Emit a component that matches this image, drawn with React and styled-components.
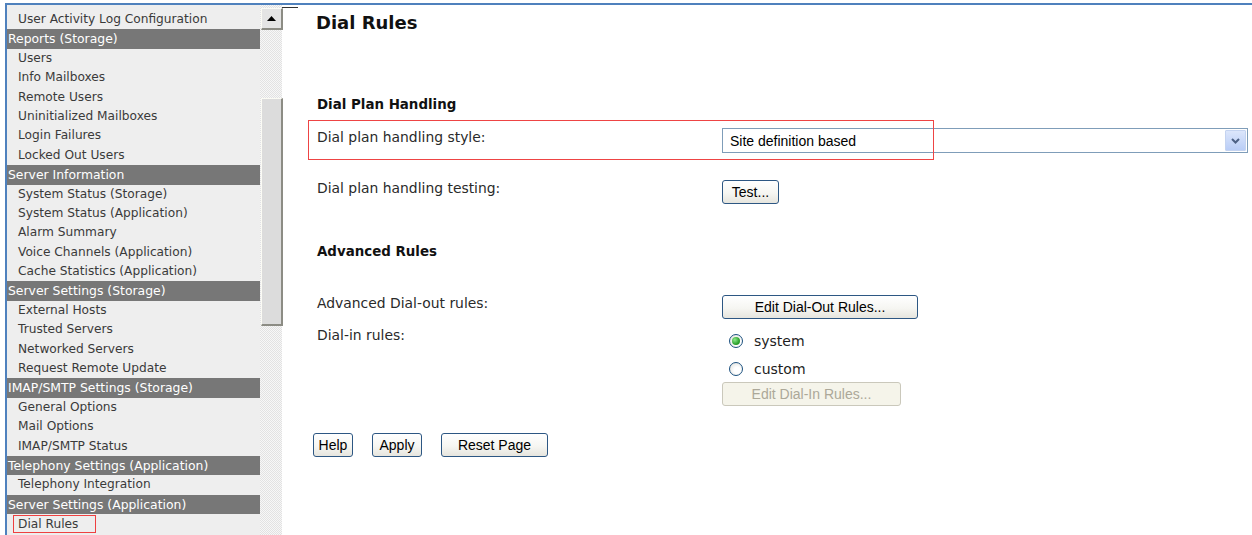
import styled, { createGlobalStyle } from 'styled-components';

const GlobalStyle = createGlobalStyle`
  html, body {
    margin: 0;
    padding: 0;
    background: #ffffff;
    overflow: hidden;
  }
`;

const Frame = styled.div`
  margin: 3px 0 0 5px;
  height: 532px;
  border-top: 2px solid #4f81bd;
  border-left: 2px solid #4f81bd;
  display: flex;
  overflow: hidden;
`;

const Sidebar = styled.nav`
  width: 253px;
  flex: none;
  background: #eeeeee;
  padding-top: 5px;
  font-family: "DejaVu Sans", Verdana, sans-serif;
`;

const NavItem = styled.div`
  height: 19.4px;
  line-height: 19.4px;
  white-space: nowrap;
  color: ${(p) => (p.$header ? '#ffffff' : '#3a3a3a')};
  background: ${(p) => (p.$header ? '#777777' : 'transparent')};
  padding-left: ${(p) => (p.$header ? '1px' : '11px')};
  font-size: ${(p) => (p.$header ? '12.4px' : '12.2px')};
`;

const Marked = styled.span`
  display: inline-block;
  vertical-align: top;
  margin: 1px 0 0 -5px;
  padding: 0 17px 0 4px;
  line-height: 16px;
  border: 1px solid #ee4040;
`;

const Scrollbar = styled.div`
  width: 22px;
  flex: none;
  display: flex;
  flex-direction: column;
  padding-top: 3px;
  background-color: #f4f4f4;
  background-image: repeating-conic-gradient(#e2e2e2 0 25%, #f7f7f7 0 50%);
  background-size: 2px 2px;
`;

const ScrollButton = styled.div`
  width: 19px;
  height: 19px;
  margin-left: 1px;
  background: #e4e4e4;
  border-top: 1px solid #fbfbf4;
  border-left: 1px solid #fbfbf4;
  border-right: 2px solid #8c8c84;
  border-bottom: 2px solid #8c8c84;
  display: flex;
  align-items: center;
  justify-content: center;
`;

const Thumb = styled(ScrollButton)`
  height: 225px;
  margin-top: 68px;
  background: #dcdcdc;
`;

const Content = styled.main`
  flex: 1;
  position: relative;
  padding: 0 4px 0 26px;
  font-family: "DejaVu Sans", Verdana, sans-serif;
  color: #1e1e1e;
  &::before {
    content: '';
    position: absolute;
    left: 0;
    top: 2px;
    width: 16px;
    border-top: 1px solid #333333;
  }
`;

const Title = styled.h1`
  margin: 8px 0 0 8px;
  font-size: 18px;
  line-height: 20px;
  font-weight: bold;
  color: #111111;
`;

const SectionTitle = styled.h2`
  margin: ${(p) => p.$top}px 0 0 9px;
  font-size: 13.4px;
  line-height: 18px;
  font-weight: bold;
  color: #111111;
`;

const Row = styled.div`
  position: relative;
  display: grid;
  grid-template-columns: 405px 1fr;
  padding-left: 9px;
  margin-top: ${(p) => p.$top || 0}px;
  height: ${(p) => (p.$height ? `${p.$height}px` : 'auto')};
`;

const Label = styled.div`
  font-size: 13.9px;
  line-height: 16px;
  padding-top: ${(p) => p.$pad || 0}px;
  color: #2a2a2a;
`;

const Highlight = styled.span`
  position: absolute;
  left: 0;
  top: 0;
  width: 624px;
  height: 38px;
  border: 1px solid #ee4444;
  pointer-events: none;
`;

const Select = styled.div`
  margin-top: 8px;
  height: 23px;
  display: flex;
  align-items: center;
  border: 1px solid #7f9db9;
  background: #ffffff;
  font-family: "Liberation Sans", Arial, sans-serif;
  font-size: 14px;
  color: #000000;
`;

const SelectValue = styled.span`
  flex: 1;
  padding-left: 7px;
`;

const SelectButton = styled.span`
  width: 19px;
  height: 19px;
  margin-right: 1px;
  border: 1px solid #c4d3f0;
  border-radius: 1px;
  background: linear-gradient(#dce6fb, #b9cdf7);
  display: flex;
  align-items: center;
  justify-content: center;
`;

const Button = styled.button`
  height: 24px;
  width: ${(p) => p.$width}px;
  padding: 0;
  font-family: "Liberation Sans", Arial, sans-serif;
  font-size: 14px;
  color: ${(p) => (p.disabled ? '#aca899' : '#000000')};
  border: 1px solid ${(p) => (p.disabled ? '#cac8bb' : '#2d5783')};
  border-radius: 3px;
  background: ${(p) =>
    p.disabled
      ? '#f5f4ea'
      : 'linear-gradient(#ffffff 0%, #f6f6f2 55%, #e6e5de 100%)'};
  cursor: default;
`;

const ControlStack = styled.div`
  display: flex;
  flex-direction: column;
  align-items: flex-start;
`;

const RadioRow = styled.label`
  height: ${(p) => p.$height}px;
  display: flex;
  align-items: center;
  gap: 11px;
  padding-left: 7px;
  font-size: 14px;
  color: #1e1e1e;
`;

const RadioDot = styled.span`
  width: 14px;
  height: 14px;
  box-sizing: border-box;
  border-radius: 50%;
  border: 1px solid #1c5180;
  background: radial-gradient(circle at 60% 60%, #ffffff 30%, #dcdcd6 100%);
  display: flex;
  align-items: center;
  justify-content: center;
  &::after {
    content: '';
    width: 8px;
    height: 8px;
    border-radius: 50%;
    display: ${(p) => (p.$checked ? 'block' : 'none')};
    background: radial-gradient(circle at 35% 35%, #8de98a, #2fa32f 60%, #21891f);
  }
`;

const Footer = styled.div`
  display: flex;
  gap: 19px;
  margin: 27px 0 0 5px;
`;

const navItems = [
  { text: 'User Activity Log Configuration' },
  { text: 'Reports (Storage)', header: true },
  { text: 'Users' },
  { text: 'Info Mailboxes' },
  { text: 'Remote Users' },
  { text: 'Uninitialized Mailboxes' },
  { text: 'Login Failures' },
  { text: 'Locked Out Users' },
  { text: 'Server Information', header: true },
  { text: 'System Status (Storage)' },
  { text: 'System Status (Application)' },
  { text: 'Alarm Summary' },
  { text: 'Voice Channels (Application)' },
  { text: 'Cache Statistics (Application)' },
  { text: 'Server Settings (Storage)', header: true },
  { text: 'External Hosts' },
  { text: 'Trusted Servers' },
  { text: 'Networked Servers' },
  { text: 'Request Remote Update' },
  { text: 'IMAP/SMTP Settings (Storage)', header: true },
  { text: 'General Options' },
  { text: 'Mail Options' },
  { text: 'IMAP/SMTP Status' },
  { text: 'Telephony Settings (Application)', header: true },
  { text: 'Telephony Integration' },
  { text: 'Server Settings (Application)', header: true },
  { text: 'Dial Rules', current: true },
];

const App = () => {
  return (
    <>
      <GlobalStyle />
      <Frame>
        <Sidebar>
          {navItems.map((item) => (
            <NavItem key={item.text} $header={item.header}>
              {item.current ? <Marked>{item.text}</Marked> : item.text}
            </NavItem>
          ))}
        </Sidebar>
        <Scrollbar>
          <ScrollButton>
            <svg width="9" height="5" viewBox="0 0 9 5">
              <path d="M0 5 L4.5 0 L9 5 Z" fill="#000" />
            </svg>
          </ScrollButton>
          <Thumb />
        </Scrollbar>
        <Content>
          <Title>Dial Rules</Title>

          <SectionTitle $top={63}>Dial Plan Handling</SectionTitle>
          <Row $top={6} $height={40}>
            <Highlight />
            <Label $pad={9}>Dial plan handling style:</Label>
            <Select>
              <SelectValue>Site definition based</SelectValue>
              <SelectButton>
                <svg width="9" height="6" viewBox="0 0 9 6">
                  <path d="M1 1 L4.5 4.5 L8 1" fill="none" stroke="#4d6185" strokeWidth="2" />
                </svg>
              </SelectButton>
            </Select>
          </Row>
          <Row $top={20}>
            <Label>Dial plan handling testing:</Label>
            <div>
              <Button $width={57}>Test...</Button>
            </div>
          </Row>

          <SectionTitle $top={39}>Advanced Rules</SectionTitle>
          <Row $top={34}>
            <Label>Advanced Dial-out rules:</Label>
            <div>
              <Button $width={196}>Edit Dial-Out Rules...</Button>
            </div>
          </Row>
          <Row $top={8}>
            <Label>Dial-in rules:</Label>
            <ControlStack>
              <RadioRow $height={28}>
                <RadioDot $checked />
                system
              </RadioRow>
              <RadioRow $height={27}>
                <RadioDot />
                custom
              </RadioRow>
              <Button $width={179} disabled>
                Edit Dial-In Rules...
              </Button>
            </ControlStack>
          </Row>

          <Footer>
            <Button $width={40}>Help</Button>
            <Button $width={50}>Apply</Button>
            <Button $width={107}>Reset Page</Button>
          </Footer>
        </Content>
      </Frame>
    </>
  );
};

export default App;
